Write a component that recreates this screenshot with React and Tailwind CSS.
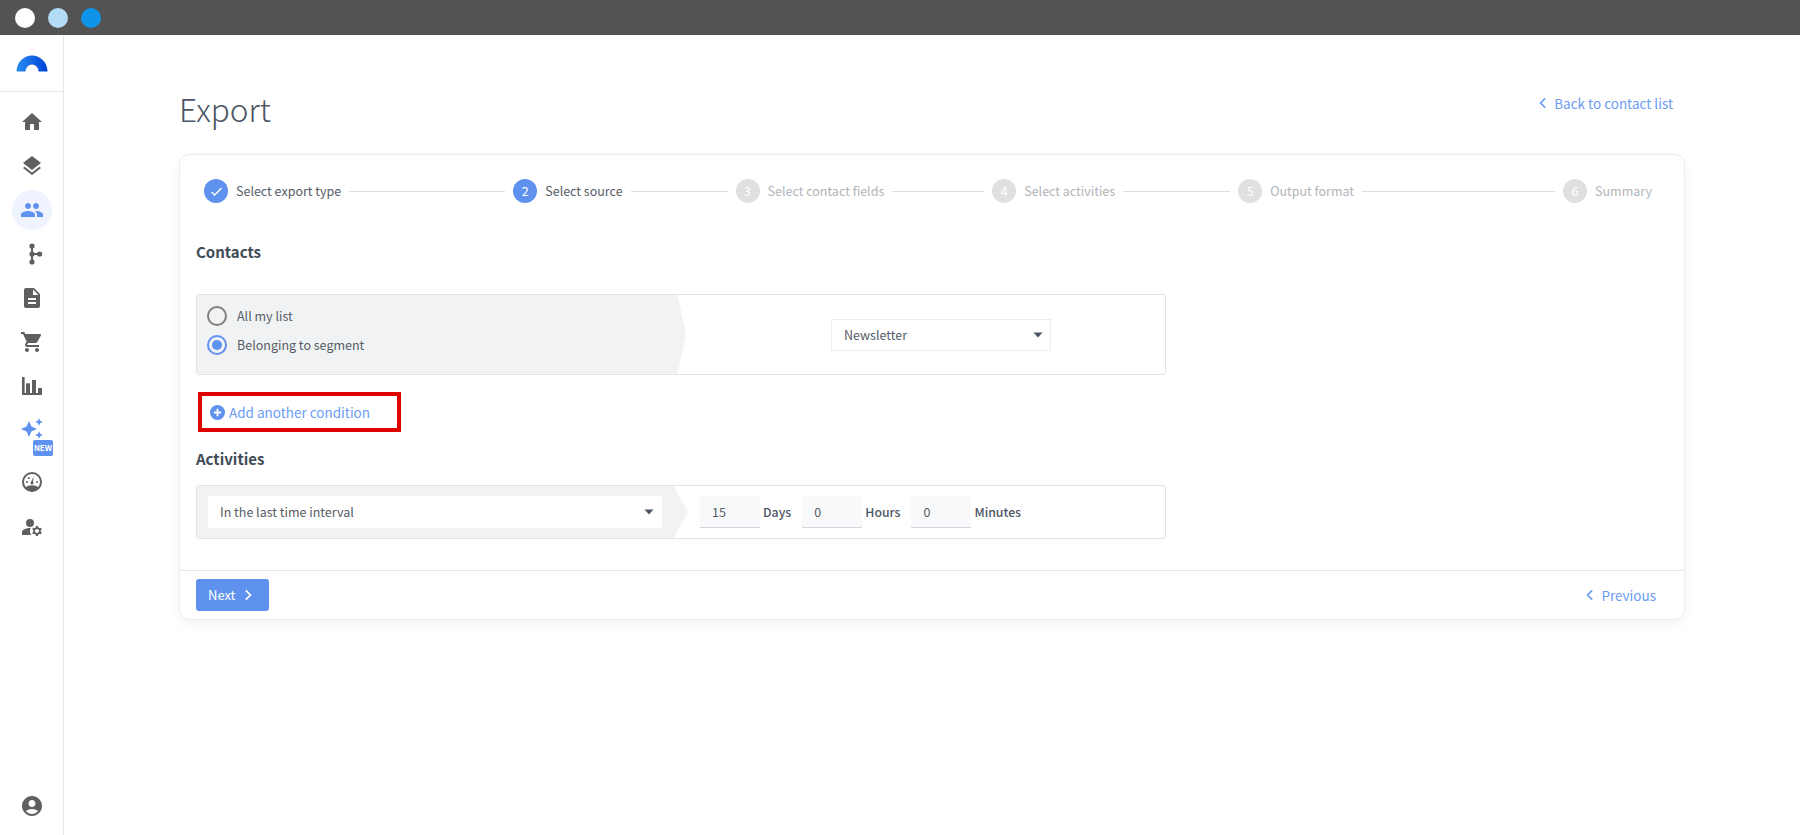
import React from "react";
import { MdHome, MdLayers, MdPeople, MdDescription, MdShoppingCart, MdManageAccounts, MdAccountCircle, MdCheck } from "react-icons/md";

function Caret() {
  return (
    <svg width="10" height="6" viewBox="0 0 10 6" className="shrink-0">
      <path d="M0.5 0.5 H9.5 L5 5.5 Z" fill="#4b5563" />
    </svg>
  );
}

function Chev({ dir = "left", color = "#6b9cf2", size = 12 }) {
  return (
    <svg width={size} height={size} viewBox="0 0 10 10" className="shrink-0">
      <path d={dir === "left" ? "M6.8 1.2 L3 5 L6.8 8.8" : "M3.2 1.2 L7 5 L3.2 8.8"} fill="none" stroke={color} strokeWidth="1.4" />
    </svg>
  );
}

function Fork() {
  return (
    <svg width="24" height="24" viewBox="0 0 24 24" fill="#5f5f5f">
      <rect x="11" y="4" width="2" height="16" />
      <rect x="12" y="11" width="7" height="2" />
      <circle cx="12" cy="4" r="2.6" />
      <circle cx="12" cy="12" r="2.6" />
      <circle cx="12" cy="20" r="2.6" />
      <circle cx="19.6" cy="12" r="2.6" />
    </svg>
  );
}

function Bars() {
  return (
    <svg width="24" height="24" viewBox="0 0 24 24" fill="#5f5f5f">
      <rect x="2" y="3" width="2.6" height="18" />
      <rect x="2" y="19" width="20" height="2" />
      <rect x="6" y="9.3" width="4" height="11" />
      <rect x="12" y="6" width="4" height="14" />
      <rect x="18" y="14" width="4" height="6" />
    </svg>
  );
}

function Gauge() {
  return (
    <svg width="24" height="24" viewBox="0 0 24 24">
      <circle cx="12" cy="12" r="9" fill="none" stroke="#5f5f5f" strokeWidth="2" />
      <path d="M5.5 17.5 C8 14.6 16 14.6 18.5 17.5 C15 21.4 9 21.4 5.5 17.5 Z" fill="#5f5f5f" />
      <path d="M13.8 6.5 L12.8 12.8 L10.8 12.2 Z" fill="#5f5f5f" />
      <circle cx="12" cy="13" r="1.5" fill="#5f5f5f" />
      <circle cx="7" cy="12" r="1" fill="#5f5f5f" />
      <circle cx="8.8" cy="8" r="1" fill="#5f5f5f" />
      <circle cx="17" cy="12" r="1" fill="#5f5f5f" />
    </svg>
  );
}

function Star({ cx, cy, r }) {
  const k = r * 0.3;
  return (
    <path
      d={`M${cx} ${cy - r} L${cx + k} ${cy - k} L${cx + r} ${cy} L${cx + k} ${cy + k} L${cx} ${cy + r} L${cx - k} ${cy + k} L${cx - r} ${cy} L${cx - k} ${cy - k} Z`}
      fill="#5e92ee"
    />
  );
}

function NavItem({ children }) {
  return <div className="h-[44px] w-full flex items-center justify-center">{children}</div>;
}

function Step({ n, label, state, line }) {
  const circle =
    state === "off" ? "bg-[#e0e0e0]" : "bg-[#5e92ee]";
  const text = state === "off" ? "text-[#b1b4b9]" : "text-[#555d66]";
  return (
    <>
      <div className={`w-6 h-6 rounded-full flex items-center justify-center text-white text-[12.5px] leading-none shrink-0 ${circle}`}>
        {state === "done" ? <MdCheck size={15} color="#ffffff" /> : n}
      </div>
      <span className={`ml-2 text-[12.5px] leading-6 whitespace-nowrap ${text}`}>{label}</span>
      {line ? <div className="h-px bg-[#dedfe1] mx-2 shrink-0" style={{ width: line }} /> : null}
    </>
  );
}

function NumField({ value, unit }) {
  return (
    <>
      <input
        readOnly
        value={value}
        className="w-[60px] h-[32px] bg-[#f8f9fb] border-b border-[#d3d5da] pl-3 text-[12.5px] text-[#555d66] outline-none"
      />
      <span className="ml-[3px] mr-[11px] text-[12.3px] font-medium text-[#4b5563] leading-6">{unit}</span>
    </>
  );
}

export default function App() {
  return (
    <div className="w-full h-[835px] flex flex-col bg-white overflow-hidden font-['Noto_Sans_CJK_SC','Noto_Sans',sans-serif]">
      <div className="h-[35px] shrink-0 bg-[#535353] flex items-center pl-[15px] gap-[13px]">
        <div className="w-5 h-5 rounded-full bg-white" />
        <div className="w-5 h-5 rounded-full bg-[#b3dcf7]" />
        <div className="w-5 h-5 rounded-full bg-[#0d93e8]" />
      </div>
      <div className="flex-1 flex min-h-0">
        <aside className="w-[64px] shrink-0 border-r border-[#e8e8e8] flex flex-col">
          <div className="h-[57px] shrink-0 border-b border-[#e8e8e8] flex items-center justify-center">
            <svg width="32" height="17" viewBox="0 0 32 17" className="ml-px">
              <defs>
                <linearGradient id="logo" x1="0" y1="0" x2="1" y2="0">
                  <stop offset="0" stopColor="#2a8cf0" />
                  <stop offset="1" stopColor="#0042d6" />
                </linearGradient>
              </defs>
              <path d="M0.5 16.5 A15.5 16 0 0 1 31.5 16.5 L22.5 16.5 A6.5 7 0 0 0 9.5 16.5 Z" fill="url(#logo)" />
            </svg>
          </div>
          <nav className="flex-1 flex flex-col pt-2 pb-[7px]">
            <NavItem><MdHome size={24} color="#5f5f5f" /></NavItem>
            <NavItem><MdLayers size={24} color="#5f5f5f" /></NavItem>
            <NavItem>
              <div className="w-10 h-10 rounded-full bg-[#eef3fd] flex items-center justify-center">
                <MdPeople size={24} color="#5e92ee" />
              </div>
            </NavItem>
            <NavItem><Fork /></NavItem>
            <NavItem><MdDescription size={24} color="#5f5f5f" /></NavItem>
            <NavItem><MdShoppingCart size={24} color="#5f5f5f" /></NavItem>
            <NavItem><Bars /></NavItem>
            <div className="h-[52px] w-full relative">
              <svg width="32" height="32" viewBox="0 0 32 32" className="absolute left-[20px] top-[5px]">
                <Star cx={9} cy={16} r={8} />
                <Star cx={19} cy={9} r={3.8} />
                <Star cx={19} cy={22} r={3.8} />
              </svg>
              <span className="absolute left-[33px] top-[32px] w-[20px] h-[16px] rounded-[2px] bg-[#5e92ee] text-white text-[8px] font-bold leading-[16px] text-center">NEW</span>
            </div>
            <NavItem><Gauge /></NavItem>
            <div className="mt-[1px]"><NavItem><MdManageAccounts size={24} color="#5f5f5f" /></NavItem></div>
            <div className="mt-auto"><NavItem><MdAccountCircle size={24} color="#5f5f5f" /></NavItem></div>
          </nav>
        </aside>

        <main className="flex-1 min-w-0 pl-[115px] pr-[115px]">
          <div className="h-[119px] pt-[29px] flex items-center justify-between">
            <h1 className="text-[31.5px] font-light leading-none text-[#4b5563]">Export</h1>
            <a className="flex items-center gap-[5px] pr-3 mt-[-12px] text-[13.5px] leading-6 text-[#6b9cf2]">
              <Chev />
              Back to contact list
            </a>
          </div>

          <div className="rounded-[10px] border border-[#ececee] bg-white shadow-[0_4px_12px_rgba(0,0,0,0.05)]">
            <div className="pt-6 pl-6 flex items-center h-[48px]">
              <Step n="1" state="done" label="Select export type" line="156px" />
              <Step n="2" state="on" label="Select source" line="97px" />
              <Step n="3" state="off" label="Select contact fields" line="92px" />
              <Step n="4" state="off" label="Select activities" line="107px" />
              <Step n="5" state="off" label="Output format" line="193px" />
              <Step n="6" state="off" label="Summary" />
            </div>

            <div className="px-4">
              <h2 className="mt-[37px] text-[15px] font-bold leading-6 text-[#414b55]">Contacts</h2>

              <div className="mt-[30px] w-[970px] h-[81px] border border-[#e1e3e6] rounded-[3px] flex">
                <div className="w-[489px] shrink-0 bg-[#f1f2f4] [clip-path:polygon(0_0,calc(100%-8.5px)_0,100%_50%,calc(100%-8.5px)_100%,0_100%)] pl-[10px] pt-[11px] flex flex-col gap-[9px]">
                  <label className="flex items-center gap-[10px] h-5">
                    <span className="w-5 h-5 rounded-full border-2 border-[#7f7f7f] bg-transparent shrink-0" />
                    <span className="text-[12.5px] leading-5 text-[#555d66]">All my list</span>
                  </label>
                  <label className="flex items-center gap-[10px] h-5">
                    <span className="w-5 h-5 rounded-full border-2 border-[#5e92ee] flex items-center justify-center shrink-0">
                      <span className="w-[10px] h-[10px] rounded-full bg-[#5e92ee]" />
                    </span>
                    <span className="text-[12.5px] leading-5 text-[#555d66]">Belonging to segment</span>
                  </label>
                </div>
                <div className="ml-[145px] mt-6 w-[220px] h-[32px] border border-[#ebecee] flex items-center justify-between pl-3 pr-[7px]">
                  <span className="text-[12.5px] text-[#555d66]">Newsletter</span>
                  <Caret />
                </div>
              </div>

              <div className="mt-[17px] ml-[2px] w-[203px] h-[40px] border-4 border-[#e00000] flex items-center pl-[8px] gap-[4px]">
                <svg width="15" height="15" viewBox="0 0 15 15" className="shrink-0">
                  <circle cx="7.5" cy="7.5" r="7.5" fill="#5e92ee" />
                  <path d="M7.5 3.8 V11.2 M3.8 7.5 H11.2" stroke="#ffffff" strokeWidth="1.8" />
                </svg>
                <span className="text-[13.5px] leading-6 whitespace-nowrap text-[#6b9cf2]">Add another condition</span>
              </div>

              <h2 className="mt-[15px] text-[15px] font-bold leading-6 text-[#414b55]">Activities</h2>

              <div className="mt-[14px] w-[970px] h-[54px] border border-[#e1e3e6] rounded-[3px] flex items-center">
                <div className="w-[491px] h-full shrink-0 bg-[#f1f2f4] [clip-path:polygon(0_0,calc(100%-14.5px)_0,100%_50%,calc(100%-14.5px)_100%,0_100%)] pl-[11px] flex items-center">
                  <div className="w-[454px] h-[32px] bg-white flex items-center justify-between pl-3 pr-2">
                    <span className="text-[12.5px] text-[#555d66]">In the last time interval</span>
                    <Caret />
                  </div>
                </div>
                <div className="ml-3 flex items-center">
                  <NumField value="15" unit="Days" />
                  <NumField value="0" unit="Hours" />
                  <NumField value="0" unit="Minutes" />
                </div>
              </div>
            </div>

            <div className="mt-[31px] h-[49px] border-t border-[#e4e5e7] pt-2 pl-4 pr-7 flex items-start justify-between">
              <button className="w-[73px] h-[32px] rounded-[3px] bg-[#5e92ee] flex items-center pl-3 gap-[6px] text-[13px] text-white">
                Next
                <Chev dir="right" color="#ffffff" />
              </button>
              <a className="h-[32px] flex items-center gap-[5px] text-[13.5px] text-[#6b9cf2]">
                <Chev />
                Previous
              </a>
            </div>
          </div>
        </main>
      </div>
    </div>
  );
}
